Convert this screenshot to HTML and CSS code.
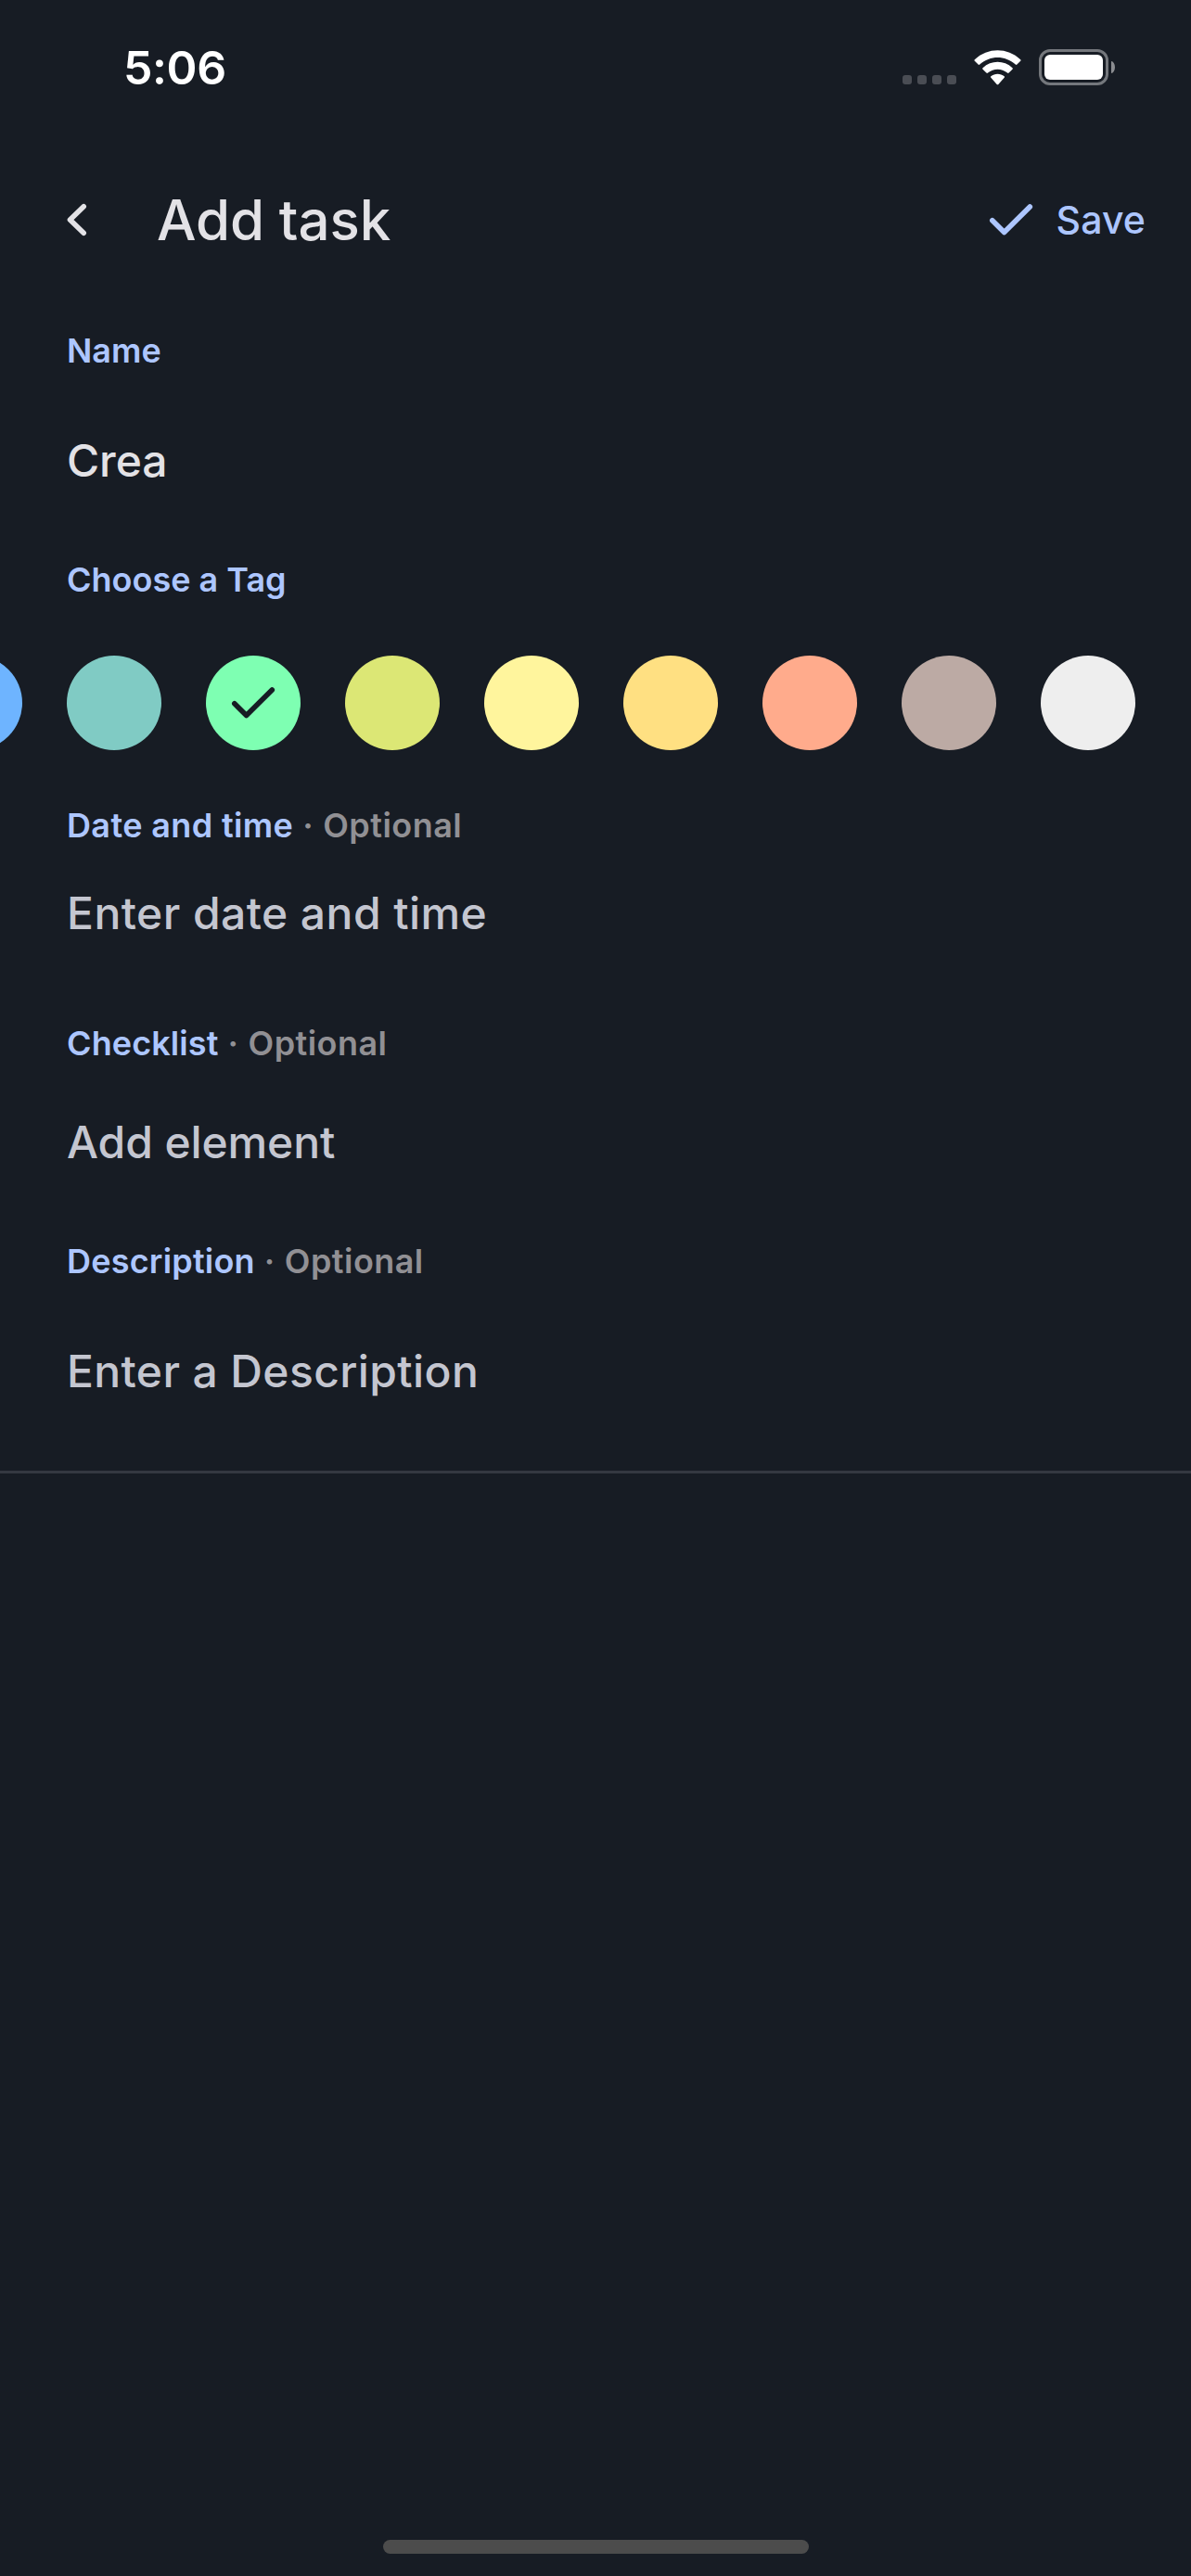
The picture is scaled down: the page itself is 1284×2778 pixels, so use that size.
FILE: index.html
```html
<!DOCTYPE html>
<html lang="en">
<head>
<meta charset="utf-8">
<title>Add task</title>
<link rel="stylesheet" href="styles.css">
</head>
<body>
<div class="screen">
  <div class="status-bar">
    <span class="clock">5:06</span>
    <div class="indicators">
      <div class="cellular"><i></i><i></i><i></i><i></i></div>
      <svg class="wifi" viewBox="0 0 51 38" width="51" height="38" fill="#fff">
        <path d="M0.8 10.2Q0 11 .8 11.8L4.600 15.600Q5.400 16.300 6.200 15.600C17.500 5.500 33.500 5.500 44.800 15.600Q45.600 16.300 46.400 15.600L50.200 11.800Q51 11 50.200 10.200C36-3.100 15-3.100 .8 10.200Z"/>
        <path d="M9.500 19.200Q8.700 20 9.500 20.800L13.400 24.600Q14.200 25.300 15 24.600C21.200 19.300 29.800 19.300 36 24.600Q36.800 25.300 37.600 24.600L41.500 20.800Q42.300 20 41.500 19.200C32.300 10.700 18.700 10.700 9.500 19.200Z"/>
        <path d="M18.300 28.200Q17.500 29 18.300 29.800L24.700 36.900Q25.500 37.700 26.300 36.900L32.700 29.800Q33.500 29 32.700 28.200C28.700 24.800 22.300 24.800 18.300 28.200Z"/>
      </svg>
      <div class="battery"><div class="battery-body"><div class="battery-fill"></div></div><div class="battery-tip"></div></div>
    </div>
  </div>

  <header class="app-bar">
    <svg class="back" viewBox="0 0 24 36" width="24" height="36"><path d="M18.200 3.700L3.500 18L18.200 32.300"/></svg>
    <h1 class="title">Add task</h1>
    <div class="save">
      <svg class="check" viewBox="0 0 48 36" width="48" height="36"><path d="M3.800 18.800L16.600 31.500L44.300 3.900"/></svg>
      <span>Save</span>
    </div>
  </header>

  <main class="form">
    <section class="field name-field">
      <div class="label">Name</div>
      <div class="value filled">Crea</div>
    </section>
    <section class="field tag-field">
      <div class="label">Choose a Tag</div>
      <div class="tags">
        <div class="tag blue"></div>
        <div class="tag teal"></div>
        <div class="tag green"><svg class="check" viewBox="0 0 48 36" width="48" height="36"><path d="M3.800 18.800L16.600 31.500L44.300 3.900"/></svg></div>
        <div class="tag lime"></div>
        <div class="tag yellow"></div>
        <div class="tag amber"></div>
        <div class="tag coral"></div>
        <div class="tag taupe"></div>
        <div class="tag white"></div>
      </div>
    </section>
    <section class="field date-field">
      <div class="label">Date and time<span class="optional"> · Optional</span></div>
      <div class="value">Enter date and time</div>
    </section>
    <section class="field list-field">
      <div class="label">Checklist<span class="optional"> · Optional</span></div>
      <div class="value">Add element</div>
    </section>
    <section class="field description-field">
      <div class="label">Description<span class="optional"> · Optional</span></div>
      <div class="value">Enter a Description</div>
    </section>
  </main>
  <div class="home-bar"></div>
</div>
</body>
</html>
```
FILE: styles.css
```css
* { box-sizing: border-box; }
body {
  margin: 0;
  background: #171c24;
  font-family: Inter, "Liberation Sans", sans-serif;
}
.screen {
  width: 1284px;
  height: 2778px;
  display: flex;
  flex-direction: column;
  overflow: hidden;
  background: #171c24;
}
.status-bar {
  height: 141px;
  padding: 43px 82px 0 133px;
  display: flex;
  justify-content: space-between;
  align-items: flex-start;
}
.clock { font-size: 50px; line-height: 60px; font-weight: 600; letter-spacing: -0.4px; color: #fff; }
.indicators { display: flex; align-items: flex-end; height: 49px; }
.cellular { display: flex; gap: 6px; padding-bottom: 1px; margin-right: 19px; }
.cellular i { width: 10px; height: 10px; border-radius: 3px; background: #4a4d54; }
.wifi { margin-right: 19px; }
.battery { display: flex; align-items: center; gap: 3px; }
.battery-body { width: 75px; height: 39px; border: 3px solid #74777c; border-radius: 12px; padding: 3px; }
.battery-fill { height: 27px; border-radius: 6px; background: #fff; }
.battery-tip { width: 4px; height: 13px; border-radius: 0 4px 4px 0 / 0 6.500px 6.500px 0; background: #8b8d91; }
.app-bar { height: 213px; padding: 60px 49px 0 72px; display: flex; align-items: flex-start; }
.back { margin-top: 18px; fill: none; stroke: #e3e2e6; stroke-width: 5.600; stroke-linecap: round; stroke-linejoin: round; }
.title { margin: 0 0 0 73px; font-size: 60px; line-height: 72px; font-weight: 500; letter-spacing: -0.1px; color: #e3e2e6; }
.save { margin-left: auto; display: flex; align-items: center; gap: 25px; height: 72px; font-size: 41px; font-weight: 500; letter-spacing: 0.1px; color: #adc6ff; }
.check { fill: none; stroke: #adc6ff; stroke-width: 5.600; stroke-linecap: round; stroke-linejoin: round; }
.form { border-bottom: 3px solid #343841; padding-bottom: 77px; }
.field { padding: 0 72px; margin-bottom: 74px; }
.field:last-child { margin-bottom: 0; }
.label { font-size: 36px; line-height: 48px; font-weight: 600; letter-spacing: 0; color: #adc6ff; white-space: pre; }
.value { margin-top: 53px; font-size: 48px; line-height: 60px; font-weight: 500; letter-spacing: -0.1px; color: #c4c6d0; white-space: pre; }
.filled { color: #e3e2e6; }
.name-field .value, .description-field .value { margin-top: 65px; }
.tag-field { margin-bottom: 57px; }
.date-field { margin-bottom: 86px; }
.date-field .label { letter-spacing: 0.37px; }
.date-field .value { margin-top: 41px; letter-spacing: 0.44px; }
.list-field .label { letter-spacing: 0.1px; }
.description-field .label { letter-spacing: 0.2px; }
.description-field .value { letter-spacing: 0.38px; }
.label .optional { color: #919094; letter-spacing: 0.45px; word-spacing: 0.5px; }
.tags { display: flex; gap: 48px; margin: 58px -72px 0 -150px; }
.tag { flex: none; width: 102px; height: 102px; border-radius: 50%; display: flex; align-items: center; justify-content: center; }
.tag .check { stroke: #171c24; }
.blue { background: #6eb4ff; }
.teal { background: #80cbc4; }
.green { background: #7effb2; }
.lime { background: #dce775; }
.yellow { background: #fff59d; }
.amber { background: #ffe082; }
.coral { background: #ffab8c; }
.taupe { background: #bcaaa4; }
.white { background: #eeeeee; }
.home-bar { margin: auto auto 24px; width: 459px; height: 15px; border-radius: 8px; background: #4c4c4c; }
```
